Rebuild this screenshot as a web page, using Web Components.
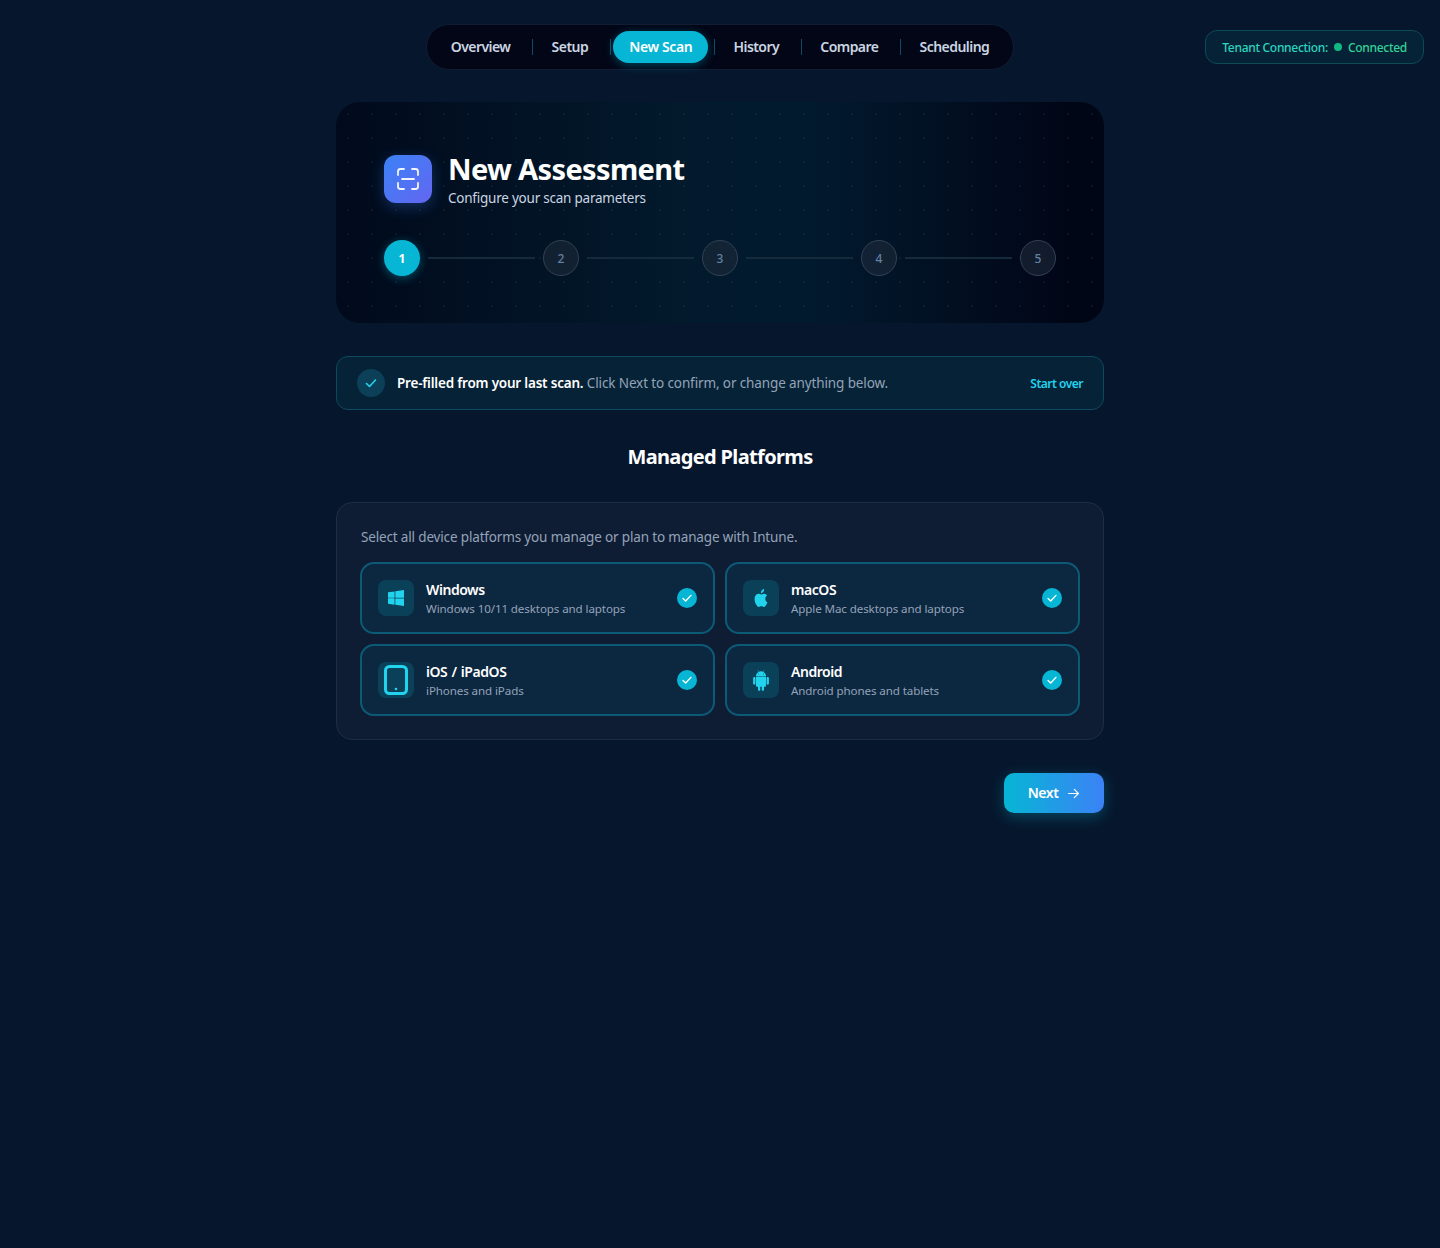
<!DOCTYPE html>
<html lang="en">
<head>
<meta charset="utf-8">
<title>New Assessment</title>
<style>
    html, body { margin: 0; background: #06172d; }
    body { min-height: 1248px; font-family: "Noto Sans", "Open Sans", sans-serif; color: #fff; }
</style>
</head>
<body>
<scan-app></scan-app>
<script>
const CHECK = '<path d="M3.5 8.5l3 3 6-6.5" fill="none" stroke="currentColor" stroke-width="1.6" stroke-linecap="round" stroke-linejoin="round"/>';

class TopNav extends HTMLElement {
    constructor() {
        super();
        const shadow = this.attachShadow({ mode: 'open' });
        shadow.innerHTML = `
            <style>
                :host { display: flex; gap: 9.2px; padding: 6px 8px; height: 32px; background: #020617; border: 1px solid #111d33; border-radius: 23px; }
                a { box-sizing: border-box; position: relative; display: flex; align-items: center; padding: 0 16px 2px; height: 32px; border-radius: 16px; font-size: 14px; font-weight: 600; letter-spacing: -0.55px; color: #cbd5e1; }
                a:not(:last-child)::after { content: ''; position: absolute; right: -7px; top: 8px; width: 1px; height: 16px; background: #0e4a63; }
                a.active { background: #06b6d4; color: #fff; letter-spacing: -0.4px; box-shadow: 0 2px 10px rgba(6, 182, 212, .35); }
            </style>
            <a>Overview</a><a>Setup</a><a class="active">New Scan</a><a>History</a><a>Compare</a><a>Scheduling</a>
        `;
    }
}

class TenantBadge extends HTMLElement {
    constructor() {
        super();
        const shadow = this.attachShadow({ mode: 'open' });
        shadow.innerHTML = `
            <style>
                :host { display: flex; align-items: center; height: 32px; padding: 0 16px; background: #062236; border: 1px solid #0c4a56; border-radius: 12px; font-size: 12px; font-weight: 500; letter-spacing: -0.3px; color: #2dd4bf; white-space: nowrap; }
                i { width: 8px; height: 8px; margin: 0 6px; border-radius: 50%; background: #10b981; }
                b { font-weight: 500; color: #34d399; }
            </style>
            Tenant Connection:<i></i><b>Connected</b>
        `;
    }
}

class StepTrack extends HTMLElement {
    constructor() {
        super();
        const shadow = this.attachShadow({ mode: 'open' });
        let steps = '';
        for (let n = 1; n <= 5; n++) {
            steps += `<span class="dot ${n === 1 ? 'on' : ''}">${n}</span>`;
            if (n < 5) steps += '<span class="line"></span>';
        }
        shadow.innerHTML = `
            <style>
                :host { display: flex; align-items: center; }
                .dot { box-sizing: border-box; flex: none; display: flex; align-items: center; justify-content: center; width: 36px; height: 36px; border-radius: 50%; border: 1px solid #334155; background: rgba(30, 41, 59, .6); font-size: 12px; font-weight: 500; color: #64809f; }
                .dot.on { border: 0; background: #06b6d4; color: #fff; font-weight: 700; box-shadow: 0 2px 10px rgba(6, 182, 212, .4); }
                .line { flex: 1; height: 2px; margin: 0 8px; background: #152a3a; }
            </style>
            ${steps}
        `;
    }
}

class HeroPanel extends HTMLElement {
    constructor() {
        super();
        const shadow = this.attachShadow({ mode: 'open' });
        shadow.innerHTML = `
            <style>
                :host { display: block; padding: 48px 48px 47px; border-radius: 24px;
                    background:
                        radial-gradient(circle at center, rgba(148, 163, 184, .08) 0.7px, transparent 1px) 0 0 / 24px 24px,
                        linear-gradient(90deg, #010a1c 0%, #021a2c 45%, #021a2e 62%, #010617 95%); }
                .head { display: flex; align-items: center; gap: 16px; height: 58px; margin-bottom: 32px; }
                .icon { display: flex; align-items: center; justify-content: center; width: 48px; height: 48px; border-radius: 12px; background: linear-gradient(135deg, #3b82f6, #6366f1); box-shadow: 0 4px 14px rgba(59, 130, 246, .3); color: #fff; }
                h1 { margin: 1px 0 0; font-size: 29px; line-height: 36px; font-weight: 700; letter-spacing: -0.64px; }
                p { margin: 1px 0 0; font-size: 13.5px; line-height: 20px; letter-spacing: -0.23px; color: #cbd5e1; }
            </style>
            <div class="head">
                <div class="icon">
                    <svg width="24" height="24" viewBox="0 0 24 24" fill="none" stroke="currentColor" stroke-width="1.8" stroke-linecap="round" opacity=".92"><path d="M2 8V4.500A2.500 2.500 0 0 1 4.500 2H8M16 2h3.500A2.500 2.500 0 0 1 22 4.500V8M22 16v3.500a2.500 2.500 0 0 1-2.500 2.500H16M8 22H4.500A2.500 2.500 0 0 1 2 19.500V16M6 12h12"/></svg>
                </div>
                <div>
                    <h1>New Assessment</h1>
                    <p>Configure your scan parameters</p>
                </div>
            </div>
            <step-track></step-track>
        `;
    }
}

class PrefillBanner extends HTMLElement {
    constructor() {
        super();
        const shadow = this.attachShadow({ mode: 'open' });
        shadow.innerHTML = `
            <style>
                :host { display: flex; align-items: center; gap: 12px; height: 52px; padding: 0 20px; background: #062236; border: 1px solid #0b4a5f; border-radius: 12px; font-size: 13.5px; letter-spacing: -0.12px; color: #94a3b8; }
                .tick { display: flex; align-items: center; justify-content: center; width: 28px; height: 28px; border-radius: 50%; background: #0b4058; color: #22d3ee; }
                .msg { flex: 1; }
                b { font-weight: 600; letter-spacing: -0.2px; color: #fff; }
                a { font-size: 12px; font-weight: 600; color: #22d3ee; letter-spacing: -0.5px; }
            </style>
            <span class="tick"><svg width="16" height="16" viewBox="0 0 16 16">${CHECK}</svg></span>
            <span class="msg"><b>Pre-filled from your last scan.</b> Click Next to confirm, or change anything below.</span>
            <a>Start over</a>
        `;
    }
}

class PlatformOption extends HTMLElement {
    constructor() {
        super();
        const shadow = this.attachShadow({ mode: 'open' });
        shadow.innerHTML = `
            <style>
                :host { box-sizing: border-box; display: flex; align-items: center; gap: 12px; height: 72px; padding: 0 16px; background: #0c2740; border: 2px solid #0c5a75; border-radius: 14px; }
                .icon { flex: none; display: flex; align-items: center; justify-content: center; width: 36px; height: 36px; border-radius: 8px; background: #0a4058; color: #22d3ee; }
                .text { flex: 1; }
                .name { font-size: 14px; line-height: 20px; font-weight: 600; letter-spacing: -0.45px; word-spacing: 1px; color: #fff; }
                .sub { margin-top: 1px; font-size: 11.6px; line-height: 16px; letter-spacing: -0.11px; color: #94a3b8; }
                .tick { display: flex; align-items: center; justify-content: center; width: 20px; height: 20px; border-radius: 50%; background: #06b6d4; color: #fff; }
            </style>
            <span class="icon"><slot name="icon"></slot></span>
            <div class="text">
                <div class="name">${this.getAttribute('name')}</div>
                <div class="sub">${this.getAttribute('sub')}</div>
            </div>
            <span class="tick"><svg width="14" height="14" viewBox="0 0 16 16">${CHECK}</svg></span>
        `;
    }
}

class PlatformCard extends HTMLElement {
    constructor() {
        super();
        const shadow = this.attachShadow({ mode: 'open' });
        shadow.innerHTML = `
            <style>
                :host { display: block; padding: 24px 24px 23px; background: #0f1d34; border: 1px solid #1e2d45; border-radius: 16px; }
                p { margin: 0 0 15px; font-size: 13.5px; line-height: 20px; letter-spacing: -0.16px; color: #94a3b8; }
                .grid { display: grid; grid-template-columns: 1fr 1fr; gap: 10px; margin: 0 -1px; }
            </style>
            <p>Select all device platforms you manage or plan to manage with Intune.</p>
            <div class="grid"><slot></slot></div>
        `;
    }
}

class NextButton extends HTMLElement {
    constructor() {
        super();
        const shadow = this.attachShadow({ mode: 'open' });
        shadow.innerHTML = `
            <style>
                :host { display: flex; align-items: center; justify-content: center; gap: 9px; width: 100px; height: 40px; border-radius: 10px; background: linear-gradient(90deg, #06b6d4, #3b82f6); box-shadow: 0 4px 14px rgba(6, 182, 212, .3); font-size: 14px; font-weight: 600; letter-spacing: -0.45px; color: #fff; }
                span { margin-top: -2px; }
            </style>
            <span>Next</span>
            <svg width="13" height="13" viewBox="0 0 16 16" fill="none" stroke="currentColor" stroke-width="1.5" stroke-linecap="round" stroke-linejoin="round"><path d="M2 8h12M9 3l5 5-5 5"/></svg>
        `;
    }
}

class ScanApp extends HTMLElement {
    constructor() {
        super();
        const shadow = this.attachShadow({ mode: 'open' });
        shadow.innerHTML = `
            <style>
                :host { display: block; }
                header { display: grid; grid-template-columns: 1fr auto 1fr; align-items: center; padding: 24px 16px 0; }
                tenant-badge { justify-self: end; grid-column: 3; }
                top-nav { grid-column: 2; }
                main { width: 768px; margin: 32px auto 0; }
                h2 { margin: 32px 0 30px; text-align: center; font-size: 20px; line-height: 30px; font-weight: 700; letter-spacing: -0.64px; color: #fff; }
                prefill-banner { margin-top: 33px; }
                .actions { display: flex; justify-content: flex-end; margin-top: 33px; }
                svg { display: block; }
            </style>
            <header><top-nav></top-nav><tenant-badge></tenant-badge></header>
            <main>
                <hero-panel></hero-panel>
                <prefill-banner></prefill-banner>
                <h2>Managed Platforms</h2>
                <platform-card>
                    <platform-option name="Windows" sub="Windows 10/11 desktops and laptops">
                        <svg slot="icon" width="16" height="16" viewBox="0 0 16 16" fill="currentColor"><path d="M6.555 1.375 0 2.237v5.45h6.555zM0 13.795l6.555.933V8.313H0zm7.278-5.4.026 6.378L16 16V8.395zM16 0 7.33 1.244v6.414H16z"/></svg>
                    </platform-option>
                    <platform-option name="macOS" sub="Apple Mac desktops and laptops">
                        <svg slot="icon" width="16" height="18" viewBox="0 0 16 16" preserveAspectRatio="none" fill="currentColor"><path d="M11.18 0c.1 1.05-.3 2-.9 2.7-.6.7-1.5 1.100-2.350 1.050C7.800 2.750 8.300 1.800 8.850 1.200 9.450.55 10.400.05 11.180 0zM14.400 11.900c-.35.8-.5 1.150-.95 1.850-.63.98-1.520 2.200-2.620 2.200-.98.01-1.230-.64-2.560-.63-1.330 0-1.600.64-2.580.63-1.100-.01-1.940-1.110-2.570-2.090C1.350 11.120 1.170 7.900 2.270 6.200c.78-1.200 2-1.900 3.150-1.900 1.170 0 1.900.64 2.870.64.94 0 1.500-.64 2.860-.64 1.020 0 2.100.56 2.870 1.520-2.520 1.380-2.110 4.980.38 6.080z"/></svg>
                    </platform-option>
                    <platform-option name="iOS / iPadOS" sub="iPhones and iPads">
                        <svg slot="icon" width="24" height="30" viewBox="0 0 24 30"><rect x="1.500" y="1.500" width="21" height="27" rx="4" fill="none" stroke="currentColor" stroke-width="3"/><circle cx="12" cy="24" r="1.300" fill="currentColor"/></svg>
                    </platform-option>
                    <platform-option name="Android" sub="Android phones and tablets">
                        <svg slot="icon" width="18" height="21" viewBox="0 0 16 16" preserveAspectRatio="none" fill="currentColor"><path d="m10.213 1.471.691-1.26q.069-.124-.048-.192-.128-.057-.195.058l-.7 1.27A4.8 4.8 0 0 0 8.005.941q-1.032 0-1.956.404l-.7-1.27Q5.281-.037 5.154.019q-.117.069-.049.193l.691 1.259a4.25 4.25 0 0 0-1.673 1.476A3.7 3.7 0 0 0 3.5 5.02h9q0-1.125-.623-2.072a4.27 4.27 0 0 0-1.664-1.476ZM6.22 3.303a.37.37 0 0 1-.267.11.35.35 0 0 1-.263-.11.37.37 0 0 1-.107-.264.37.37 0 0 1 .107-.265.35.35 0 0 1 .263-.11q.155 0 .267.11a.36.36 0 0 1 .112.265.36.36 0 0 1-.112.264m4.101 0a.35.35 0 0 1-.262.11.37.37 0 0 1-.268-.11.36.36 0 0 1-.112-.264q0-.154.112-.265a.37.37 0 0 1 .268-.11q.155 0 .262.11a.37.37 0 0 1 .107.265q0 .153-.107.264M3.500 11.770q0 .441.311.75.311.306.76.307h.758l.01 2.182q0 .414.292.703a.96.96 0 0 0 .7.288.97.97 0 0 0 .71-.288.95.95 0 0 0 .292-.703v-2.182h1.343v2.182q0 .414.292.703a.97.97 0 0 0 .71.288.97.97 0 0 0 .71-.288.95.95 0 0 0 .292-.703v-2.182h.76q.436 0 .749-.308.31-.307.311-.75V5.365h-9zm10.495-6.587a.98.98 0 0 0-.702.278.9.9 0 0 0-.293.685v4.063q0 .406.293.69a.97.97 0 0 0 .702.284q.42 0 .712-.284a.92.92 0 0 0 .293-.69V6.146a.9.9 0 0 0-.293-.685 1 1 0 0 0-.712-.278m-12.702.283a1 1 0 0 1 .712-.283q.41 0 .702.283a.9.9 0 0 1 .293.68v4.063a.93.93 0 0 1-.288.69.97.97 0 0 1-.707.284 1 1 0 0 1-.712-.284.92.92 0 0 1-.293-.69V6.146q0-.396.293-.68"/></svg>
                    </platform-option>
                </platform-card>
                <div class="actions"><next-button></next-button></div>
            </main>
        `;
    }
}

customElements.define('top-nav', TopNav);
customElements.define('tenant-badge', TenantBadge);
customElements.define('step-track', StepTrack);
customElements.define('hero-panel', HeroPanel);
customElements.define('prefill-banner', PrefillBanner);
customElements.define('platform-option', PlatformOption);
customElements.define('platform-card', PlatformCard);
customElements.define('next-button', NextButton);
customElements.define('scan-app', ScanApp);
</script>
</body>
</html>
